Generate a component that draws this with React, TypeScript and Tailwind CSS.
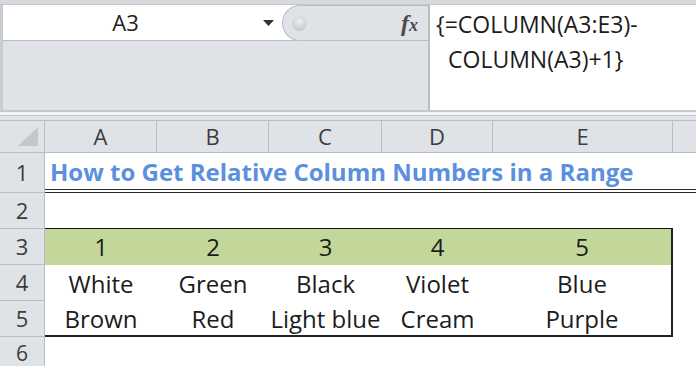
import React from "react";

const cols = ["A", "B", "C", "D", "E"];

export default function App() {
  const font = { fontFamily: '"Open Sans", "Liberation Sans", sans-serif' };
  const hdr = "bg-[#dfe3e8] border-r border-b border-[#b8bdc2] flex items-center justify-center text-[22px] text-[#3c3c3c]";
  const rowHdr = "bg-[#dfe3e8] border-r border-b border-[#b8bdc2] flex items-center justify-center text-[22px] text-[#3c3c3c]";
  const cell = "flex items-center justify-center text-[24px] text-[#1c1c1c] whitespace-nowrap";
  const data = [
    ["White", "Green", "Black", "Violet", "Blue"],
    ["Brown", "Red", "Light blue", "Cream", "Purple"],
  ];
  return (
    <div className="w-[696px] h-[366px] overflow-hidden bg-[#dfe3e8] flex flex-col" style={font}>
      {/* top strip */}
      <div className="h-[5px] bg-[#d6d9de] border-b border-[#c3c7cc] shrink-0" />
      {/* formula area */}
      <div className="h-[105px] flex shrink-0">
        <div className="w-[428px] flex flex-col border-l-[3px] border-[#c9cdd2]">
          <div className="h-[36px] flex bg-white border-b border-[#b9bdc2]">
            <div className="w-[245px] flex items-center justify-center text-[22px] text-[#222]">A3</div>
            <div className="w-[34px] flex items-center justify-center pl-[6px]">
              <svg width="11" height="6" viewBox="0 0 11 6"><polygon points="0,0 11,0 5.5,6" fill="#333" /></svg>
            </div>
            <div className="flex-1 bg-[#dfe3e8] rounded-l-full border-l border-t border-b border-[#b9bdc2] -mb-px flex items-center pl-[9px] pr-[10px]">
              <div className="w-[15px] h-[15px] rounded-full bg-[radial-gradient(circle_at_50%_35%,#eef0f2,#b9bdc2)]" />
              <div className="flex-1" />
              <span className="text-[24px] font-bold italic text-[#4a4a4a] leading-none" style={{ fontFamily: '"Liberation Serif", serif' }}>
                f<span className="text-[18px]">x</span>
              </span>
            </div>
          </div>
          <div className="flex-1" />
        </div>
        <div className="flex-1 bg-white border-l-2 border-[#b9bdc2] pl-[6px] pt-[2px] text-[23px] leading-[35px] text-[#1c1c1c] whitespace-nowrap">
          <div>{"{=COLUMN(A3:E3)-"}</div>
          <div className="pl-[12px]">{"COLUMN(A3)+1}"}</div>
        </div>
      </div>
      {/* separator */}
      <div className="h-[11px] shrink-0 flex flex-col">
        <div className="h-[2px] bg-[#c4c8cd]" />
        <div className="h-[3px] bg-[#f3f4f6]" />
        <div className="h-px bg-[#c4c8cd]" />
        <div className="flex-1 bg-[#dfe3e8]" />
        <div className="h-px bg-[#b8bdc2]" />
      </div>
      {/* grid */}
      <div className="flex-1 grid grid-cols-[45px_112px_112px_113px_111px_180px_1fr] grid-rows-[32px_40px_36px_36px_36px_36px_1fr] bg-white">
        {/* header row */}
        <div className={hdr + " relative"}>
          <svg className="absolute left-[18px] top-[6px]" width="20" height="19" viewBox="0 0 20 19">
            <polygon points="0,19 20,0 20,19" fill="#c3c7cc" />
          </svg>
        </div>
        {cols.map((c) => (
          <div key={c} className={hdr}>{c}</div>
        ))}
        <div className="bg-[#dfe3e8] border-b border-[#b8bdc2]" />
        {/* row 1 */}
        <div className={rowHdr}>1</div>
        <div className="col-span-6 border-b-[4px] border-double border-[#2a2a2a] flex items-center pl-[5px] pt-[2px] whitespace-nowrap text-[24px] font-bold text-[#5b8fe0]">
          How to Get Relative Column Numbers in a Range
        </div>
        {/* row 2 */}
        <div className={rowHdr}>2</div>
        <div className="col-span-5 border-b border-[#111]" />
        <div />
        {/* row 3 */}
        <div className={rowHdr}>3</div>
        {[1, 2, 3, 4, 5].map((n, i) => (
          <div key={n} className={cell + " bg-[#c4d79b]" + (i === 4 ? " border-r-2 border-[#222]" : "")}>{n}</div>
        ))}
        <div />
        {/* rows 4-5 */}
        {data.map((r, ri) => (
          <React.Fragment key={ri}>
            <div className={rowHdr}>{ri + 4}</div>
            {r.map((t, i) => (
              <div
                key={t}
                className={
                  cell +
                  " pt-[2px]" +
                  (i === 4 ? " border-r-2 border-[#222]" : "") +
                  (ri === 1 ? " border-b-2 border-[#222]" : "")
                }
              >
                {t}
              </div>
            ))}
            <div />
          </React.Fragment>
        ))}
        {/* row 6 */}
        <div className="bg-[#dfe3e8] border-r border-[#b8bdc2] flex justify-center items-start pt-[6px] text-[21px] leading-none text-[#3c3c3c]">6</div>
        <div className="col-span-6" />
      </div>
    </div>
  );
}
